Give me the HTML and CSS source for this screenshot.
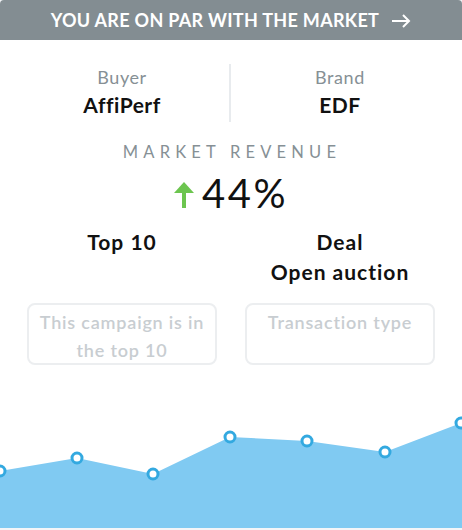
FILE: index.html
```html
<!DOCTYPE html>
<html lang="en">
<head>
    <meta charset="UTF-8">
    <meta name="viewport" content="width=device-width, initial-scale=1.0">
    <title>Market Comparison</title>
    <link rel="stylesheet" href="styles.css">
</head>
<body>

    <div class="card">
        <div class="banner">
            <span>YOU ARE ON PAR WITH THE MARKET</span>
            <svg class="banner-arrow" width="20" height="14" viewBox="0 0 20 14">
                <path d="M1 7h17M12 1l6 6-6 6" fill="none" stroke="#fff" stroke-width="2"/>
            </svg>
        </div>

        <div class="info-row">
            <div class="info">
                <div class="label">Buyer</div>
                <div class="value">AffiPerf</div>
            </div>
            <div class="info divided">
                <div class="label">Brand</div>
                <div class="value">EDF</div>
            </div>
        </div>

        <div class="revenue">
            <div class="revenue-title">MARKET REVENUE</div>
            <div class="revenue-value">
                <svg class="up-arrow" width="20" height="28" viewBox="0 0 20 28">
                    <path d="M10 27V6" stroke="#6cc54f" stroke-width="4"/>
                    <path d="M0 12L10 1l10 11z" fill="#6cc54f"/>
                </svg>
                <span>44%</span>
            </div>
        </div>

        <div class="deal-row">
            <div class="deal">Top 10</div>
            <div class="deal">Deal<br>Open auction</div>
        </div>

        <div class="box-row">
            <div class="hint-box">This campaign is in the top 10</div>
            <div class="hint-box">Transaction type</div>
        </div>

        <svg class="chart" width="462" height="133" viewBox="0 395 462 133">
            <polygon points="0,471 77,458 153,474 230,437 307,441 385,452 461,423 462,423 462,528 0,528" fill="#80caf2"/>
            <g fill="#fff" stroke="#33a9e0" stroke-width="3">
                <circle cx="0" cy="471" r="5"/>
                <circle cx="77" cy="458" r="5"/>
                <circle cx="153" cy="474" r="5"/>
                <circle cx="230" cy="437" r="5"/>
                <circle cx="307" cy="441" r="5"/>
                <circle cx="385" cy="452" r="5"/>
                <circle cx="461" cy="423" r="5"/>
            </g>
        </svg>
    </div>

</body>
</html>
```

FILE: styles.css
```css
/* Basic page styling */
body {
    margin: 0;
    padding: 0;
    font-family: Lato, "Open Sans", sans-serif;
    background-color: #f3f5f8;
    color: #111;
}

.card {
    width: 462px;
    background-color: #fff;
    border-radius: 4px 4px 0 0;
    overflow: hidden;
}

.banner {
    height: 40px;
    display: flex;
    justify-content: center;
    align-items: center;
    gap: 12px;
    background-color: #838d92;
    color: #fff;
    font-size: 18px;
    letter-spacing: 0.3px;
    font-weight: bold;
}

.banner-arrow {
    margin-top: 1px;
}

.info-row {
    display: grid;
    grid-template-columns: 1fr 1fr;
    margin: 24px 27px 0;
    column-gap: 28px;
}

.info {
    text-align: center;
    height: 58px;
}

.divided {
    position: relative;
}

.divided::before {
    content: "";
    position: absolute;
    left: -16px;
    top: 0;
    bottom: 0;
    width: 2px;
    background-color: #e8ebee;
}

.label {
    font-size: 18px;
    line-height: 26px;
    letter-spacing: 0.6px;
    color: #869095;
}

.value {
    font-size: 21px;
    line-height: 29px;
    letter-spacing: 0.5px;
    font-weight: bold;
}

.revenue {
    text-align: center;
    margin-top: 19px;
}

.revenue-title {
    font-size: 16.5px;
    line-height: 22px;
    letter-spacing: 5.2px;
    color: #869095;
    margin-left: 2px;
}

.revenue-value {
    display: flex;
    justify-content: center;
    align-items: center;
    gap: 8px;
    height: 44px;
    margin-top: 8px;
    font-size: 40px;
    letter-spacing: 2.5px;
}

.up-arrow {
    margin-top: 4px;
}

.deal-row, .box-row {
    display: grid;
    grid-template-columns: 1fr 1fr;
    column-gap: 28px;
    margin: 0 27px;
}

.deal-row {
    margin-top: 12px;
}

.deal {
    text-align: center;
    font-size: 21px;
    line-height: 30px;
    letter-spacing: 1px;
    font-weight: bold;
}

.box-row {
    margin-top: 16px;
}

.hint-box {
    height: 62px;
    box-sizing: border-box;
    padding: 3px 4px 0;
    border: 2px solid #eceef0;
    border-radius: 8px;
    text-align: center;
    font-size: 18px;
    line-height: 28px;
    letter-spacing: 0.8px;
    font-weight: 600;
    color: #c8cdd1;
}

.chart {
    display: block;
    margin-top: 30px;
}
```
